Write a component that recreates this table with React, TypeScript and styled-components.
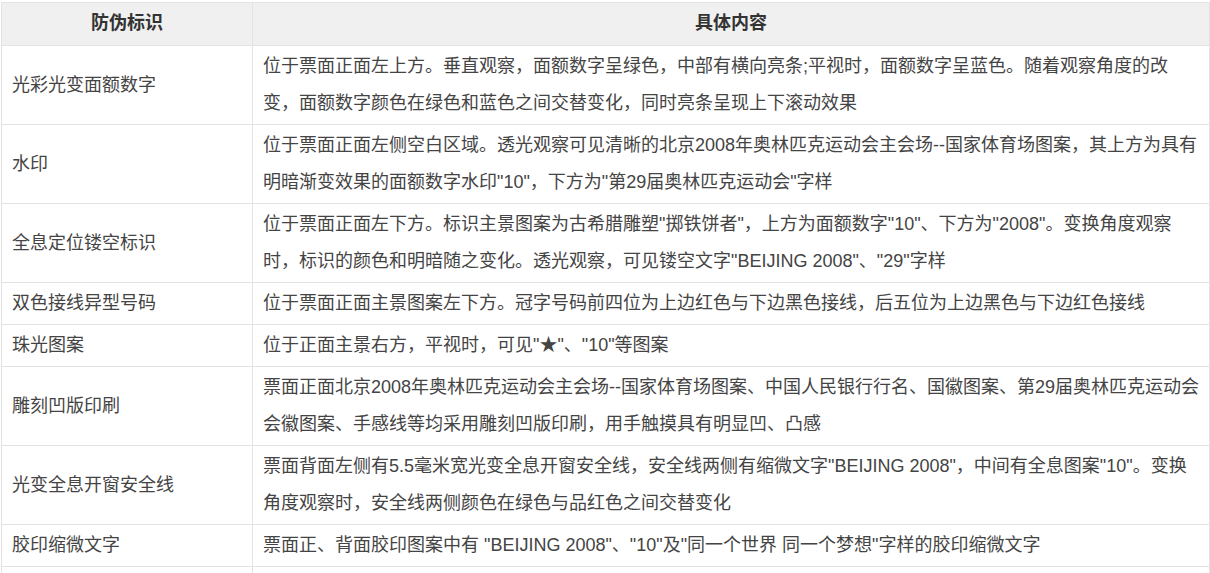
import styled, { createGlobalStyle } from 'styled-components';

const GlobalStyle = createGlobalStyle`
  body {
    margin: 0;
    background: #ffffff;
    font-family: 'Liberation Sans', 'Noto Sans CJK SC', sans-serif;
  }
`;

const Wrapper = styled.div`
  padding: 2px 0 0 1px;
`;

const Table = styled.table`
  width: 1209px;
  border-collapse: collapse;
  table-layout: fixed;
  font-size: 18px;
  color: #333333;
`;

const HeadCell = styled.th`
  background-color: #f0f0f0;
  font-weight: bold;
  text-align: center;
  line-height: 37px;
  padding: 2px 10px 3px;
  border: 1px solid #e3e3e3;
  color: #333333;
`;

const Cell = styled.td<{ $wide?: boolean }>`
  text-align: left;
  vertical-align: middle;
  line-height: 37px;
  padding: 2px ${({ $wide }) => ($wide ? '8px' : '10px')} 2px 10px;
  border: 1px solid #e3e3e3;
  color: #444444;
  word-break: break-all;
`;

const rows = [
  {
    name: '光彩光变面额数字',
    text: '位于票面正面左上方。垂直观察，面额数字呈绿色，中部有横向亮条;平视时，面额数字呈蓝色。随着观察角度的改变，面额数字颜色在绿色和蓝色之间交替变化，同时亮条呈现上下滚动效果',
  },
  {
    name: '水印',
    text: '位于票面正面左侧空白区域。透光观察可见清晰的北京2008年奥林匹克运动会主会场--国家体育场图案，其上方为具有明暗渐变效果的面额数字水印"10"，下方为"第29届奥林匹克运动会"字样',
  },
  {
    name: '全息定位镂空标识',
    text: '位于票面正面左下方。标识主景图案为古希腊雕塑"掷铁饼者"，上方为面额数字"10"、下方为"2008"。变换角度观察时，标识的颜色和明暗随之变化。透光观察，可见镂空文字"BEIJING 2008"、"29"字样',
  },
  {
    name: '双色接线异型号码',
    text: '位于票面正面主景图案左下方。冠字号码前四位为上边红色与下边黑色接线，后五位为上边黑色与下边红色接线',
  },
  {
    name: '珠光图案',
    text: '位于正面主景右方，平视时，可见"★"、"10"等图案',
  },
  {
    name: '雕刻凹版印刷',
    text: '票面正面北京2008年奥林匹克运动会主会场--国家体育场图案、中国人民银行行名、国徽图案、第29届奥林匹克运动会会徽图案、手感线等均采用雕刻凹版印刷，用手触摸具有明显凹、凸感',
  },
  {
    name: '光变全息开窗安全线',
    text: '票面背面左侧有5.5毫米宽光变全息开窗安全线，安全线两侧有缩微文字"BEIJING 2008"，中间有全息图案"10"。变换角度观察时，安全线两侧颜色在绿色与品红色之间交替变化',
  },
  {
    name: '胶印缩微文字',
    text: '票面正、背面胶印图案中有 "BEIJING 2008"、"10"及"同一个世界 同一个梦想"字样的胶印缩微文字',
  },
  {
    name: '\u00a0',
    text: '\u00a0',
  },
];

const App = () => {
  return (
    <>
      <GlobalStyle />
      <Wrapper>
        <Table>
          <colgroup>
            <col style={{ width: 251 }} />
            <col />
          </colgroup>
          <thead>
            <tr>
              <HeadCell>防伪标识</HeadCell>
              <HeadCell>具体内容</HeadCell>
            </tr>
          </thead>
          <tbody>
            {rows.map((row, i) => (
              <tr key={i}>
                <Cell>{row.name}</Cell>
                <Cell $wide>{row.text}</Cell>
              </tr>
            ))}
          </tbody>
        </Table>
      </Wrapper>
    </>
  );
};

export default App;
